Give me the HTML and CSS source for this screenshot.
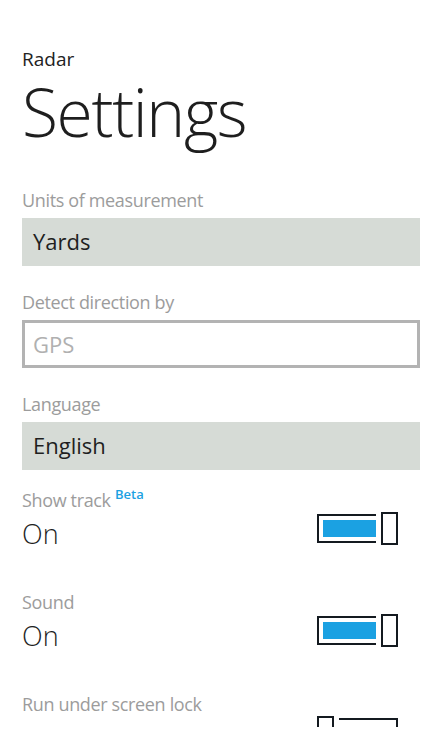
FILE: index.html
```html
<!DOCTYPE html>
<html lang="en">
<head>
<meta charset="utf-8">
<title>Radar Settings</title>
<link rel="stylesheet" href="styles.css">
</head>
<body>
<div class="viewport">
  <header class="page-header">
    <div class="app-title">Radar</div>
    <h1 class="page-title">Settings</h1>
  </header>

  <section class="field">
    <div class="field-label">Units of measurement</div>
    <div class="picker">Yards</div>
  </section>

  <section class="field">
    <div class="field-label">Detect direction by</div>
    <div class="picker picker-disabled">GPS</div>
  </section>

  <section class="field">
    <div class="field-label">Language</div>
    <div class="picker">English</div>
  </section>

  <section class="toggle toggle-first">
    <div class="field-label toggle-label">Show track <span class="beta">Beta</span></div>
    <div class="toggle-state">On</div>
    <div class="switch switch-on">
      <span class="track"><span class="fill"></span></span>
      <span class="thumb"></span>
    </div>
  </section>

  <section class="toggle">
    <div class="field-label toggle-label">Sound</div>
    <div class="toggle-state">On</div>
    <div class="switch switch-on">
      <span class="track"><span class="fill"></span></span>
      <span class="thumb"></span>
    </div>
  </section>

  <section class="toggle">
    <div class="field-label toggle-label">Run under screen lock</div>
    <div class="toggle-state">Off</div>
    <div class="switch switch-off">
      <span class="thumb"></span>
      <span class="track"></span>
    </div>
  </section>
</div>
</body>
</html>
```

FILE: styles.css
```css
html, body {
  margin: 0;
  padding: 0;
  background: #ffffff;
}

body {
  font-family: "Open Sans", "Noto Sans", "Liberation Sans", sans-serif;
  color: #1f1f1f;
  width: 443px;
  height: 738px;
}

.viewport {
  height: 727px;
  overflow: hidden;
  padding: 47px 23px 0 22px;
  box-sizing: border-box;
}

.page-header {
  margin-bottom: 37px;
}

.app-title {
  font-size: 19px;
  line-height: 24px;
  color: #222222;
}

.page-title {
  margin: 0;
  font-size: 66px;
  line-height: 80px;
  font-weight: 300;
  color: #1e1e1e;
  letter-spacing: -1.4px;
}

.field + .field {
  margin-top: 24px;
}

.field-label {
  font-size: 18px;
  line-height: 24px;
  color: #9c9c9c;
  letter-spacing: -0.35px;
}

.picker {
  margin-top: 6px;
  height: 48px;
  box-sizing: border-box;
  padding: 0 11px;
  background: #d6dbd6;
  font-size: 22px;
  line-height: 47px;
  color: #1f1f1f;
}

.picker-disabled {
  background: #ffffff;
  border: 3px solid #b3b3b3;
  padding: 0 8px;
  line-height: 42px;
  color: #b0b0b0;
}

.toggle {
  display: grid;
  grid-template-columns: 1fr auto;
  margin-right: 22px;
  margin-top: 38px;
}

.toggle-first {
  margin-top: 18px;
}

.toggle-label {
  grid-column: 1 / 3;
}

.beta {
  font-size: 13px;
  font-weight: 600;
  line-height: 0;
  letter-spacing: 0;
  color: #1ba1e2;
  vertical-align: 8px;
}

.toggle-state {
  margin-top: 4px;
  font-size: 27px;
  line-height: 36px;
  font-weight: 300;
  color: #1f1f1f;
}

.switch {
  align-self: end;
  margin-bottom: 7px;
  display: flex;
  align-items: center;
  gap: 5px;
  height: 33px;
}

.track {
  display: block;
  width: 59px;
  height: 29px;
  box-sizing: border-box;
  border: 2px solid #141a20;
}

.switch-on .track {
  border-right: 0;
  padding: 4px 0 4px 4px;
}

.switch-off .track {
  border-left: 0;
}

.fill {
  display: block;
  height: 100%;
  background: #1ba1e2;
}

.thumb {
  display: block;
  width: 17px;
  height: 33px;
  box-sizing: border-box;
  border: 2px solid #141a20;
  background: #ffffff;
}
```
